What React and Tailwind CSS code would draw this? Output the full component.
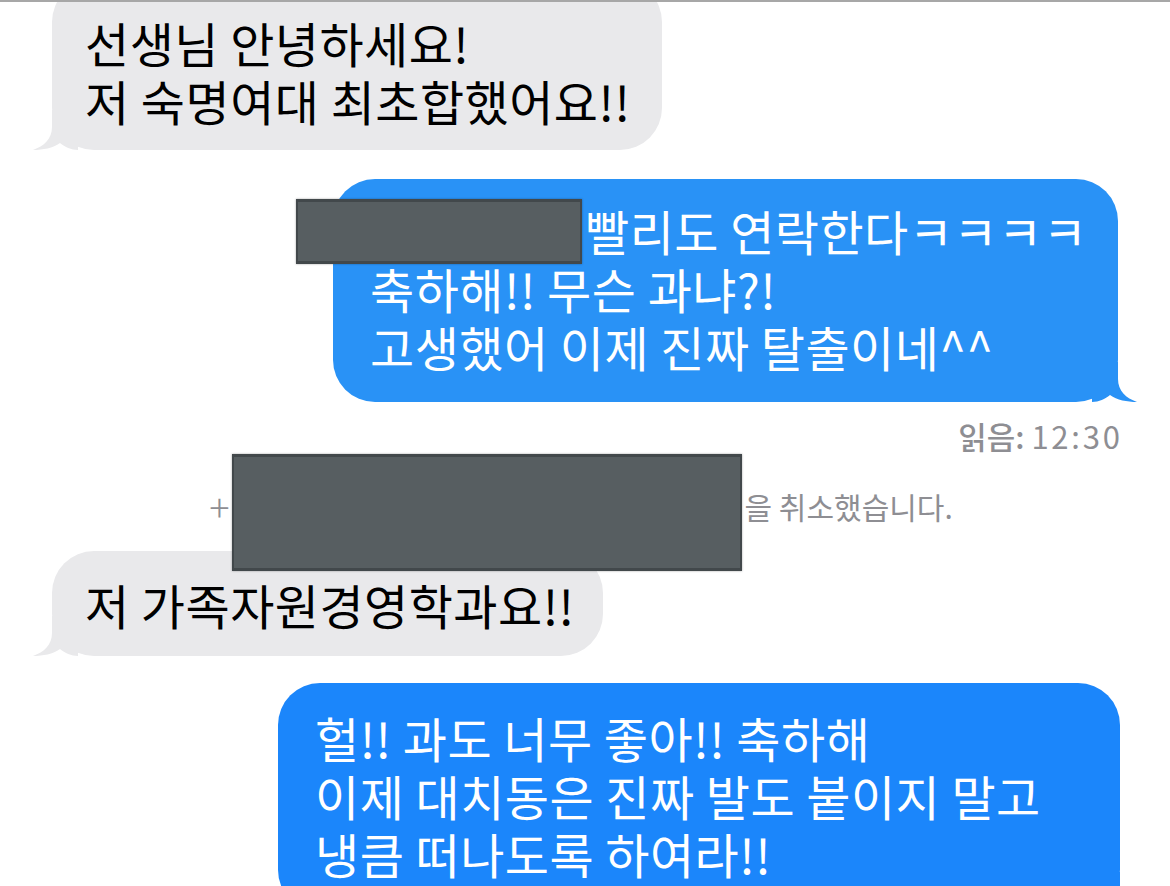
import React from 'react';

const Tail = ({ side, color }) => (
    <svg
        viewBox="0 0 45 40"
        className={`absolute bottom-0 w-[45px] h-[40px] ${side === 'left' ? 'left-[-19px]' : 'right-[-19px] -scale-x-100'}`}
    >
        <path d="M19 0 L19 17 C19 29 11 36 0 40 C10 40 20 38 27 33 C32 37 38 40 45 40 L45 0 Z" fill={color} />
    </svg>
);

const Redacted = ({ className }) => (
    <div className={`absolute bg-[#575e61] border-y-[3px] border-x-2 border-[#42484b] shadow-[0_0_2px_rgba(0,0,0,0.35)] ${className}`}></div>
);

export default function App() {
    return (
        <div className="w-[1170px] h-[886px] overflow-hidden bg-white font-['Noto_Sans_CJK_KR','Noto_Sans',sans-serif]">
            <div className="h-[2px] bg-[#a7a7a7]"></div>
            <div className="h-[884px] overflow-hidden">
                {/* incoming */}
                <div className="relative ml-[52px] mt-[-22px] w-[610px] rounded-[42px] bg-[#e9e9eb] pl-[33px] pt-[33px] pb-[21px] text-[48px] leading-[58px] tracking-[0.01em] text-black">
                    <p>선생님 안녕하세요!</p>
                    <p>저 숙명여대 최초합했어요!!</p>
                    <Tail side="left" color="#e9e9eb" />
                </div>

                {/* outgoing */}
                <div className="relative ml-auto mr-[52px] mt-[29px] w-[785px] rounded-[42px] bg-[#2992f6] pl-[37px] pt-[22px] pb-[27px] text-[48px] leading-[58px] tracking-[0.01em] text-white">
                    <p className="flex">
                        <span className="w-[215px] shrink-0"></span>
                        <span>빨리도 연락한다ㅋㅋㅋㅋ</span>
                    </p>
                    <p>축하해!! 무슨 과냐?!</p>
                    <p>고생했어 이제 진짜 탈출이네^^</p>
                    <Redacted className="left-[-37px] top-[20px] w-[286px] h-[65px]" />
                    <Tail side="right" color="#2992f6" />
                </div>

                <p className="mt-[15px] pr-[50px] text-right text-[31px] leading-[38px] text-[#8e8e93]">
                    <span className="font-medium">읽음:</span> <span className="tracking-[0.09em]">12:3</span>0
                </p>

                <div className="mt-[31px] h-[40px] pr-[8px] flex items-center justify-center text-[30px] leading-[40px] text-[#8e8e93]">
                    <span className="pr-[2px] text-[38px] font-light leading-[40px]">+</span>
                    <span className="relative w-[510px] h-[30px]">
                        <Redacted className="z-10 left-0 top-[-37px] w-full h-[117px]" />
                    </span>
                    <span className="pl-[3px]">을 취소했습니다.</span>
                </div>

                <div className="relative ml-[52px] mt-[25px] w-[551px] rounded-[42px] bg-[#e9e9eb] pl-[33px] pt-[24px] pb-[23px] text-[48px] leading-[58px] tracking-[0.01em] text-black">
                    <p>저 가족자원경영학과요!!</p>
                    <Tail side="left" color="#e9e9eb" />
                </div>

                <div className="relative ml-auto mr-[50px] mt-[27px] w-[842px] rounded-[42px] bg-[#1b86fb] pl-[37px] pt-[25px] pb-[30px] text-[48px] leading-[58px] tracking-[0.01em] text-white">
                    <p>헐!! 과도 너무 좋아!! 축하해</p>
                    <p>이제 대치동은 진짜 발도 붙이지 말고</p>
                    <p>냉큼 떠나도록 하여라!!</p>
                    <Tail side="right" color="#1b86fb" />
                </div>
            </div>
        </div>
    );
}
